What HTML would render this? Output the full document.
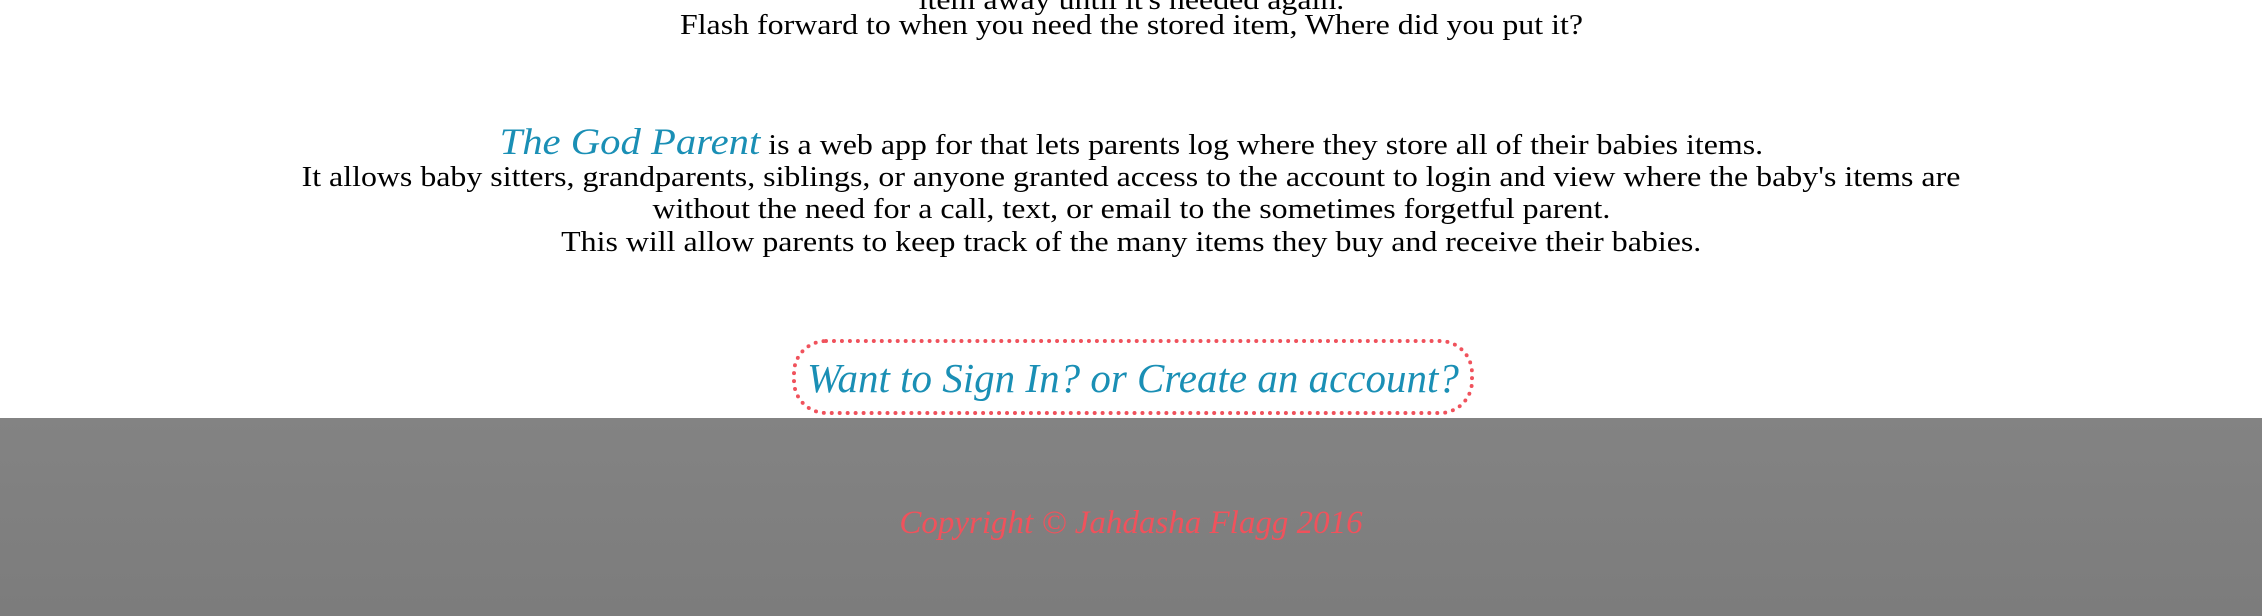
<!DOCTYPE html>
<html><head><meta charset="utf-8"><style>
html,body{margin:0;padding:0;width:2262px;height:616px;overflow:hidden;background:#fff;}
.t{position:absolute;left:0;width:2262px;text-align:center;font-family:"Liberation Serif",serif;font-size:29px;color:#000;line-height:32px;white-space:nowrap;}
.t span.s{display:inline-block;transform:scaleX(1.1);}
.g{font-style:italic;color:#1a8fb5;font-size:37px;}
.btn{position:absolute;left:792px;top:339px;width:682px;height:76px;border:4px dotted #f0525c;border-radius:34px;box-sizing:border-box;text-align:center;font-family:"Liberation Serif",serif;font-style:italic;color:#1a8fb5;font-size:41px;line-height:70px;white-space:nowrap;}
.foot{position:absolute;left:0;top:418px;width:2262px;height:198px;background:linear-gradient(#838383,#7c7c7c);}
.cp{position:absolute;left:0;top:503px;width:2262px;text-align:center;font-family:"Liberation Serif",serif;font-style:italic;color:#f0525c;font-size:33px;line-height:40px;}
</style></head><body>
<div class="t" style="top:-16px"><span class="s">item away until it's needed again.</span></div>
<div class="t" style="top:9px"><span class="s">Flash forward to when you need the stored item, Where did you put it?</span></div>
<div class="t" style="top:127px"><span class="s"><span class="g">The God Parent</span> is a web app for that lets parents log where they store all of their babies items.</span></div>
<div class="t" style="top:161px"><span class="s">It allows baby sitters, grandparents, siblings, or anyone granted access to the account to login and view where the baby's items are</span></div>
<div class="t" style="top:193px"><span class="s">without the need for a call, text, or email to the sometimes forgetful parent.</span></div>
<div class="t" style="top:226px"><span class="s">This will allow parents to keep track of the many items they buy and receive their babies.</span></div>
<div class="btn">Want to Sign In? or Create an account?</div>
<div class="foot"></div>
<div class="cp">Copyright © Jahdasha Flagg 2016</div>
</body></html>
